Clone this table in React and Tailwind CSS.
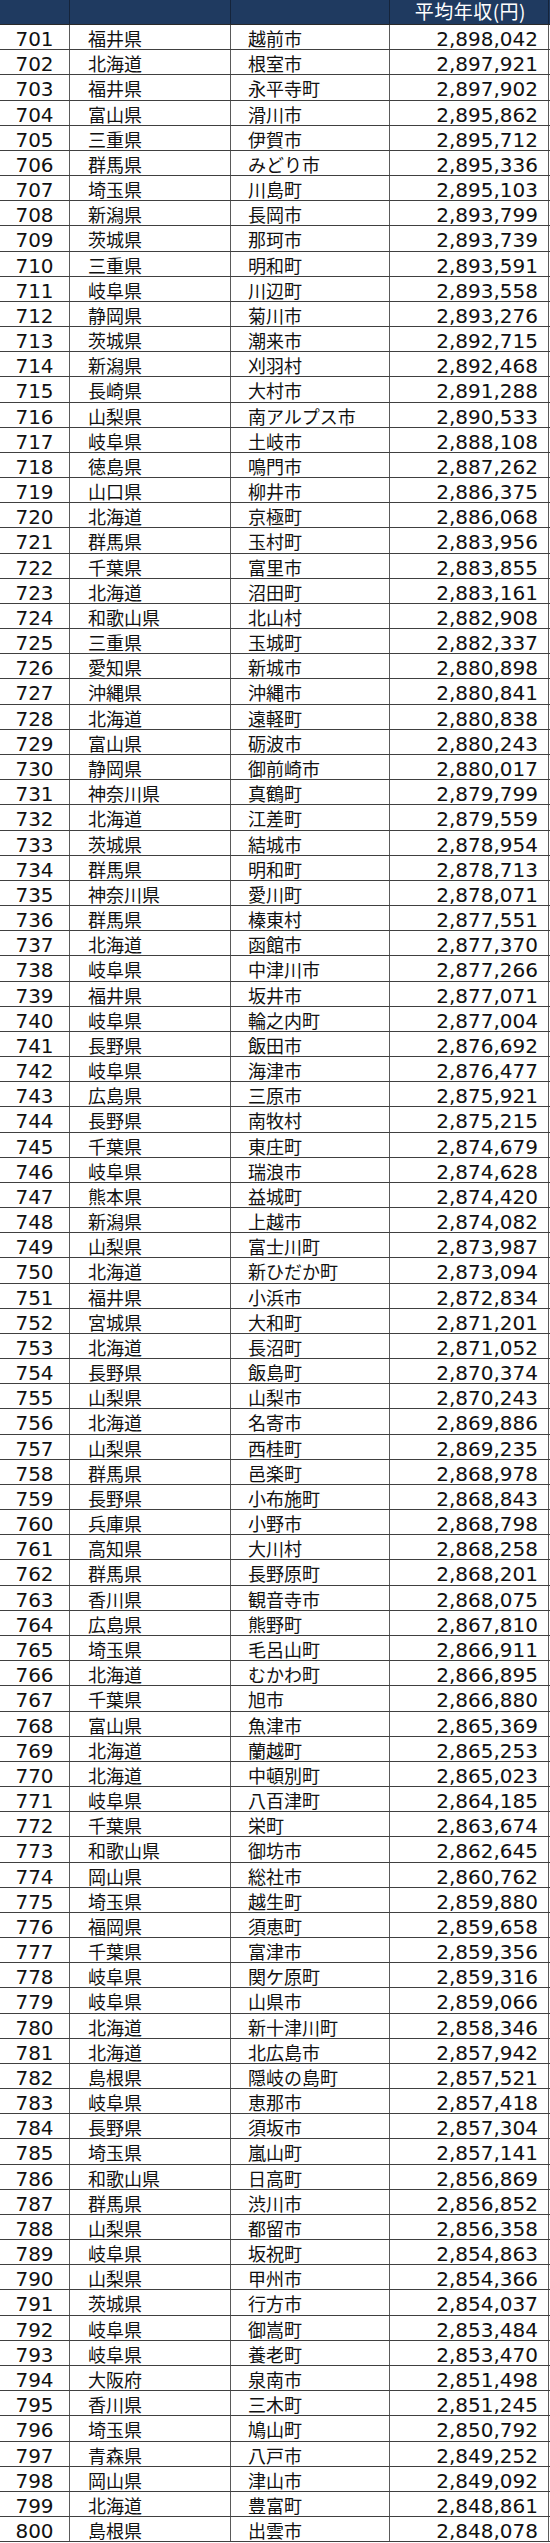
import React from "react";

const raw = `福井県 越前市 2,898,042
北海道 根室市 2,897,921
福井県 永平寺町 2,897,902
富山県 滑川市 2,895,862
三重県 伊賀市 2,895,712
群馬県 みどり市 2,895,336
埼玉県 川島町 2,895,103
新潟県 長岡市 2,893,799
茨城県 那珂市 2,893,739
三重県 明和町 2,893,591
岐阜県 川辺町 2,893,558
静岡県 菊川市 2,893,276
茨城県 潮来市 2,892,715
新潟県 刈羽村 2,892,468
長崎県 大村市 2,891,288
山梨県 南アルプス市 2,890,533
岐阜県 土岐市 2,888,108
徳島県 鳴門市 2,887,262
山口県 柳井市 2,886,375
北海道 京極町 2,886,068
群馬県 玉村町 2,883,956
千葉県 富里市 2,883,855
北海道 沼田町 2,883,161
和歌山県 北山村 2,882,908
三重県 玉城町 2,882,337
愛知県 新城市 2,880,898
沖縄県 沖縄市 2,880,841
北海道 遠軽町 2,880,838
富山県 砺波市 2,880,243
静岡県 御前崎市 2,880,017
神奈川県 真鶴町 2,879,799
北海道 江差町 2,879,559
茨城県 結城市 2,878,954
群馬県 明和町 2,878,713
神奈川県 愛川町 2,878,071
群馬県 榛東村 2,877,551
北海道 函館市 2,877,370
岐阜県 中津川市 2,877,266
福井県 坂井市 2,877,071
岐阜県 輪之内町 2,877,004
長野県 飯田市 2,876,692
岐阜県 海津市 2,876,477
広島県 三原市 2,875,921
長野県 南牧村 2,875,215
千葉県 東庄町 2,874,679
岐阜県 瑞浪市 2,874,628
熊本県 益城町 2,874,420
新潟県 上越市 2,874,082
山梨県 富士川町 2,873,987
北海道 新ひだか町 2,873,094
福井県 小浜市 2,872,834
宮城県 大和町 2,871,201
北海道 長沼町 2,871,052
長野県 飯島町 2,870,374
山梨県 山梨市 2,870,243
北海道 名寄市 2,869,886
山梨県 西桂町 2,869,235
群馬県 邑楽町 2,868,978
長野県 小布施町 2,868,843
兵庫県 小野市 2,868,798
高知県 大川村 2,868,258
群馬県 長野原町 2,868,201
香川県 観音寺市 2,868,075
広島県 熊野町 2,867,810
埼玉県 毛呂山町 2,866,911
北海道 むかわ町 2,866,895
千葉県 旭市 2,866,880
富山県 魚津市 2,865,369
北海道 蘭越町 2,865,253
北海道 中頓別町 2,865,023
岐阜県 八百津町 2,864,185
千葉県 栄町 2,863,674
和歌山県 御坊市 2,862,645
岡山県 総社市 2,860,762
埼玉県 越生町 2,859,880
福岡県 須恵町 2,859,658
千葉県 富津市 2,859,356
岐阜県 関ケ原町 2,859,316
岐阜県 山県市 2,859,066
北海道 新十津川町 2,858,346
北海道 北広島市 2,857,942
島根県 隠岐の島町 2,857,521
岐阜県 恵那市 2,857,418
長野県 須坂市 2,857,304
埼玉県 嵐山町 2,857,141
和歌山県 日高町 2,856,869
群馬県 渋川市 2,856,852
山梨県 都留市 2,856,358
岐阜県 坂祝町 2,854,863
山梨県 甲州市 2,854,366
茨城県 行方市 2,854,037
岐阜県 御嵩町 2,853,484
岐阜県 養老町 2,853,470
大阪府 泉南市 2,851,498
香川県 三木町 2,851,245
埼玉県 鳩山町 2,850,792
青森県 八戸市 2,849,252
岡山県 津山市 2,849,092
北海道 豊富町 2,848,861
島根県 出雲市 2,848,078`;

const rows = raw.split("\n").map((line, i) => {
  const [pref, city, value] = line.trim().split(" ");
  return { rank: 701 + i, pref, city, value };
});

export default function App() {
  return (
    <div className="w-[550px] bg-white">
      <div className="grid grid-cols-[70px_161px_159px_159px] h-[25px] bg-[#1f3a60] border-b border-[#2a2a2a]">
        <div className="border-r border-[#15243b]" />
        <div className="border-r border-[#15243b]" />
        <div className="border-r border-[#15243b]" />
        <div className="border-r border-[#15243b] text-right pr-[22px] pt-[1px] text-[19px] leading-[19px] tracking-[0.5px] whitespace-nowrap text-white font-['Noto_Sans_CJK_JP',sans-serif]">
          平均年収(円)
        </div>
      </div>
      {rows.map((r) => (
        <div
          key={r.rank}
          className="grid grid-cols-[70px_161px_159px_159px] h-[25.18px] border-b border-[#404040] text-[#111]"
        >
          <div className="border-r border-[#5a5a5a] text-center pt-[4px] text-[20px] leading-[20px] font-['DejaVu_Sans',sans-serif]">
            {r.rank}
          </div>
          <div className="border-r border-[#5a5a5a] pl-[18px] pt-[4px] text-[18px] leading-[18px] whitespace-nowrap font-['Noto_Sans_CJK_JP',sans-serif]">
            {r.pref}
          </div>
          <div className="border-r border-[#5a5a5a] pl-[17px] pt-[4px] text-[18px] leading-[18px] whitespace-nowrap font-['Noto_Sans_CJK_JP',sans-serif]">
            {r.city}
          </div>
          <div className="border-r border-[#5a5a5a] text-right pr-[10px] pt-[4px] text-[20px] leading-[20px] font-['DejaVu_Sans',sans-serif]">
            {r.value}
          </div>
        </div>
      ))}
    </div>
  );
}
